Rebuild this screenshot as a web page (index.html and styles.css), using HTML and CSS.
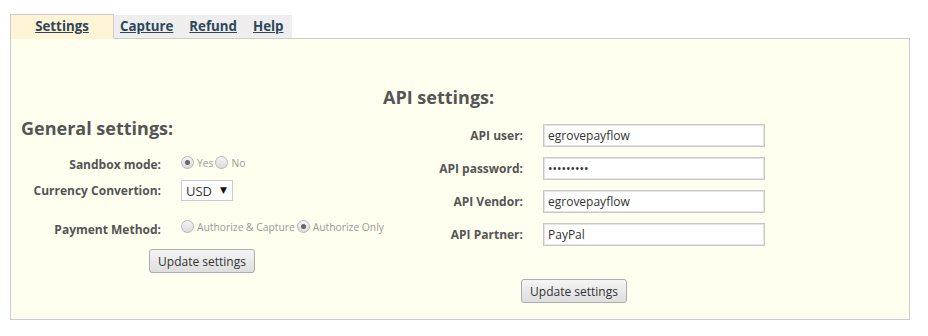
FILE: index.html
```html
<!DOCTYPE html>
<html lang="en">
<head>
    <meta charset="UTF-8">
    <title>Payflow Settings</title>
    <link rel="stylesheet" href="styles.css">
</head>
<body>
    <div class="wrap">
        <ul class="tabs">
            <li class="tab active"><a href="#">Settings</a></li>
            <li class="tab"><a href="#">Capture</a></li>
            <li class="tab"><a href="#">Refund</a></li>
            <li class="tab"><a href="#">Help</a></li>
        </ul>

        <div class="panel">
            <form class="col col-left">
                <h2>General settings:</h2>

                <div class="row row-sandbox">
                    <label class="lbl">Sandbox mode:</label>
                    <div class="val radios">
                        <span class="radio checked"></span><span class="opt">Yes</span>
                        <span class="radio"></span><span class="opt">No</span>
                    </div>
                </div>

                <div class="row row-currency">
                    <label class="lbl">Currency Convertion:</label>
                    <div class="val">
                        <span class="select-box">
                            <select class="select">
                                <option>USD</option>
                            </select>
                        </span>
                    </div>
                </div>

                <div class="row row-payment">
                    <label class="lbl">Payment Method:</label>
                    <div class="val radios">
                        <span class="radio"></span><span class="opt">Authorize &amp; Capture</span>
                        <span class="radio checked"></span><span class="opt">Authorize Only</span>
                    </div>
                </div>

                <div class="actions actions-left">
                    <button type="button" class="btn">Update settings</button>
                </div>
            </form>

            <form class="col col-right">
                <h2>API settings:</h2>

                <div class="row api-row">
                    <label class="lbl">API user:</label>
                    <input class="field" type="text" value="egrovepayflow">
                </div>
                <div class="row api-row">
                    <label class="lbl">API password:</label>
                    <input class="field" type="password" value="egrovepay">
                </div>
                <div class="row api-row">
                    <label class="lbl">API Vendor:</label>
                    <input class="field" type="text" value="egrovepayflow">
                </div>
                <div class="row api-row">
                    <label class="lbl">API Partner:</label>
                    <input class="field" type="text" value="PayPal">
                </div>

                <div class="actions actions-right">
                    <button type="button" class="btn">Update settings</button>
                </div>
            </form>
        </div>
    </div>
</body>
</html>
```

FILE: styles.css
```css
body {
    margin: 0;
    font-family: "Open Sans", "DejaVu Sans", sans-serif;
    background: #ffffff;
    color: #555;
}

.wrap {
    padding: 14px 0 0 10px;
}

/* tabs */
.tabs {
    list-style: none;
    margin: 0;
    padding: 0;
    display: flex;
    align-items: flex-end;
    position: relative;
    z-index: 1;
}

.tab {
    background: #eeeeee;
    height: 23px;
    line-height: 23px;
    padding: 0 8px;
    font-size: 13.3px;
    font-weight: bold;
}

.tab:nth-child(2) {
    padding-left: 6px;
}

.tab.active {
    background: #fff5d6;
    border: 1px solid #cccccc;
    border-bottom: none;
    width: 104px;
    box-sizing: border-box;
    height: 25px;
    padding: 0;
    text-align: center;
    margin-bottom: -1px;
}

.tab a {
    color: #2d4659;
    text-decoration: underline;
}

/* panel */
.panel {
    width: 900px;
    height: 282px;
    box-sizing: border-box;
    border: 1px solid #cccccc;
    background: #fffff0;
    display: flex;
    padding-left: 10px;
}

.col-left {
    width: 362px;
    padding-top: 77px;
}

.col-right {
    width: 382px;
    padding-top: 46px;
}

h2 {
    margin: 0;
    font-size: 18px;
    line-height: 24px;
    font-weight: bold;
    color: #555;
}

.row {
    display: flex;
    align-items: center;
}

.lbl {
    width: 140px;
    margin-right: 20px;
    text-align: right;
    font-size: 12px;
    font-weight: bold;
    color: #555;
    flex-shrink: 0;
}

.val {
    display: flex;
    align-items: center;
    white-space: nowrap;
}

.row-sandbox {
    height: 22px;
    margin-top: 13px;
}

.row-currency {
    height: 22px;
    margin-top: 4px;
}

.row-payment {
    height: 22px;
    margin-top: 16px;
}

.row-payment .lbl {
    padding-top: 3px;
}

.radios {
    margin-top: -3px;
}

.radio {
    width: 11px;
    height: 11px;
    flex-shrink: 0;
    border: 1px solid #b5b5b5;
    border-radius: 50%;
    background: linear-gradient(#f4f4f4, #dcdcdc);
    position: relative;
    margin-right: 3px;
}

.radio.checked:after {
    content: "";
    position: absolute;
    left: 3px;
    top: 3px;
    width: 5px;
    height: 5px;
    border-radius: 50%;
    background: #666;
}

.opt {
    font-size: 10.3px;
    color: #999;
    margin-right: 2px;
    flex-shrink: 0;
}

.select-box {
    position: relative;
    display: inline-block;
}

.select {
    appearance: none;
    -webkit-appearance: none;
    width: 52px;
    height: 21px;
    border: 1px solid #cccccc;
    border-radius: 0;
    background: #ffffff;
    font-family: "Open Sans", sans-serif;
    font-size: 13px;
    color: #333;
    padding: 0 0 0 4px;
    margin: 0;
}

.select-box:after {
    content: "\25BC";
    position: absolute;
    right: 6px;
    top: 4px;
    font-size: 9px;
    color: #111;
    pointer-events: none;
}

.actions {
    display: flex;
    justify-content: center;
}

.actions-left {
    margin-top: 10px;
}

.actions-right {
    margin-top: 28px;
}

.btn {
    height: 24px;
    padding: 0 8px;
    font-family: "Open Sans", sans-serif;
    font-size: 12px;
    color: #333;
    border: 1px solid #acacac;
    border-radius: 3px;
    background: linear-gradient(#f5f5f5, #dedede);
}

.api-row {
    height: 33px;
}

.api-row:first-of-type {
    margin-top: 10px;
}

.field {
    width: 222px;
    height: 23px;
    box-sizing: border-box;
    border: 1px solid #c8c8c8;
    box-shadow: inset 0 0 0 1px #e4e4e4;
    background: #ffffff;
    font-family: "Open Sans", sans-serif;
    font-size: 12px;
    color: #333;
    padding: 0 4px;
    margin: 0;
}
```
